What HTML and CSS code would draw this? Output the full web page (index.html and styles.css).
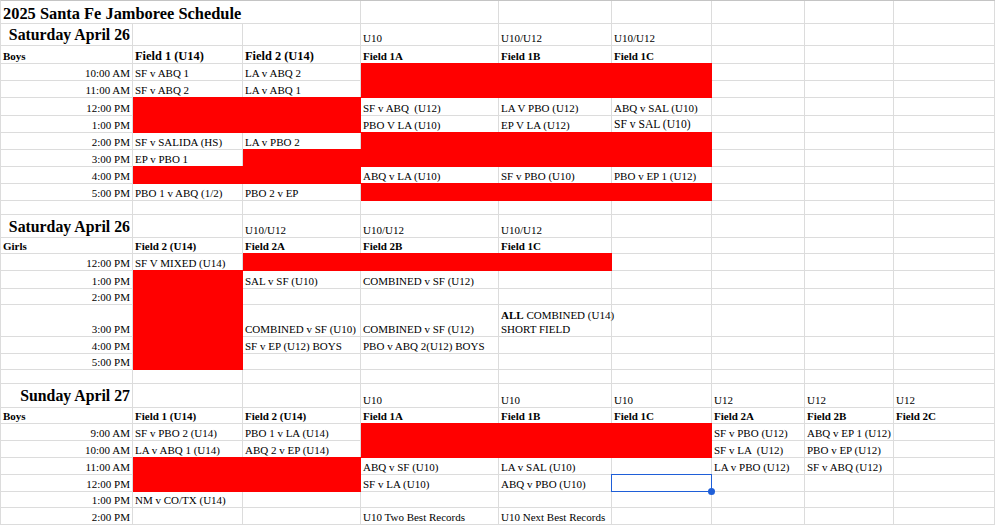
FILE: index.html
```html
<!DOCTYPE html>
<html lang="en">
<head>
<meta charset="utf-8">
<title>2025 Santa Fe Jamboree Schedule</title>
<link rel="stylesheet" href="styles.css">
</head>
<body>
<div class="sheet">
<!-- R1 -->
<div class="c title">2025 Santa Fe Jamboree Schedule</div><div class="c"></div><div class="c"></div><div class="c"></div><div class="c"></div><div class="c"></div><div class="c"></div>
<!-- R2 -->
<div class="c day">Saturday April 26</div><div class="c"></div><div class="c"></div><div class="c">U10</div><div class="c">U10/U12</div><div class="c">U10/U12</div><div class="c"></div><div class="c"></div><div class="c"></div>
<!-- R3 -->
<div class="c b">Boys</div><div class="c b big">Field 1 (U14)</div><div class="c b big">Field 2 (U14)</div><div class="c b">Field 1A</div><div class="c b">Field 1B</div><div class="c b">Field 1C</div><div class="c"></div><div class="c"></div><div class="c"></div>
<!-- R4 -->
<div class="c r">10:00 AM</div><div class="c">SF v ABQ 1</div><div class="c">LA v ABQ 2</div><div class="c red"></div><div class="c red"></div><div class="c red"></div><div class="c"></div><div class="c"></div><div class="c"></div>
<!-- R5 -->
<div class="c r">11:00 AM</div><div class="c">SF v ABQ 2</div><div class="c">LA v ABQ 1</div><div class="c red"></div><div class="c red"></div><div class="c red"></div><div class="c"></div><div class="c"></div><div class="c"></div>
<!-- R6 -->
<div class="c r">12:00 PM</div><div class="c red"></div><div class="c red"></div><div class="c">SF v ABQ &nbsp;(U12)</div><div class="c">LA V PBO (U12)</div><div class="c">ABQ v SAL (U10)</div><div class="c"></div><div class="c"></div><div class="c"></div>
<!-- R7 -->
<div class="c r">1:00 PM</div><div class="c red"></div><div class="c red"></div><div class="c">PBO V LA (U10)</div><div class="c">EP V LA (U12)</div><div class="c mid">SF v SAL (U10)</div><div class="c"></div><div class="c"></div><div class="c"></div>
<!-- R8 -->
<div class="c r">2:00 PM</div><div class="c">SF v SALIDA (HS)</div><div class="c">LA v PBO 2</div><div class="c red"></div><div class="c red"></div><div class="c red"></div><div class="c"></div><div class="c"></div><div class="c"></div>
<!-- R9 -->
<div class="c r">3:00 PM</div><div class="c">EP v PBO 1</div><div class="c red"></div><div class="c red"></div><div class="c red"></div><div class="c red"></div><div class="c"></div><div class="c"></div><div class="c"></div>
<!-- R10 -->
<div class="c r">4:00 PM</div><div class="c red"></div><div class="c red"></div><div class="c">ABQ v LA (U10)</div><div class="c">SF v PBO (U10)</div><div class="c">PBO v EP 1 (U12)</div><div class="c"></div><div class="c"></div><div class="c"></div>
<!-- R11 -->
<div class="c r">5:00 PM</div><div class="c">PBO 1 v ABQ (1/2)</div><div class="c">PBO 2 v EP</div><div class="c red"></div><div class="c red"></div><div class="c red"></div><div class="c"></div><div class="c"></div><div class="c"></div>
<!-- R12 -->
<div class="c"></div><div class="c"></div><div class="c"></div><div class="c"></div><div class="c"></div><div class="c"></div><div class="c"></div><div class="c"></div><div class="c"></div>
<!-- R13 -->
<div class="c day">Saturday April 26</div><div class="c"></div><div class="c">U10/U12</div><div class="c">U10/U12</div><div class="c">U10/U12</div><div class="c"></div><div class="c"></div><div class="c"></div><div class="c"></div>
<!-- R14 -->
<div class="c b">Girls</div><div class="c b">Field 2 (U14)</div><div class="c b">Field 2A</div><div class="c b">Field 2B</div><div class="c b">Field 1C</div><div class="c"></div><div class="c"></div><div class="c"></div><div class="c"></div>
<!-- R15 -->
<div class="c r">12:00 PM</div><div class="c">SF V MIXED (U14)</div><div class="c red"></div><div class="c red"></div><div class="c red"></div><div class="c"></div><div class="c"></div><div class="c"></div><div class="c"></div>
<!-- R16 -->
<div class="c r">1:00 PM</div><div class="c red"></div><div class="c">SAL v SF (U10)</div><div class="c">COMBINED v SF (U12)</div><div class="c"></div><div class="c"></div><div class="c"></div><div class="c"></div><div class="c"></div>
<!-- R17 -->
<div class="c r">2:00 PM</div><div class="c red"></div><div class="c"></div><div class="c"></div><div class="c"></div><div class="c"></div><div class="c"></div><div class="c"></div><div class="c"></div>
<!-- R18 -->
<div class="c r">3:00 PM</div><div class="c red"></div><div class="c">COMBINED v SF (U10)</div><div class="c">COMBINED v SF (U12)</div><div class="c"><span><b>ALL</b> COMBINED (U14)<br>SHORT FIELD</span></div><div class="c"></div><div class="c"></div><div class="c"></div><div class="c"></div>
<!-- R19 -->
<div class="c r">4:00 PM</div><div class="c red"></div><div class="c">SF v EP (U12) BOYS</div><div class="c">PBO v ABQ 2(U12) BOYS</div><div class="c"></div><div class="c"></div><div class="c"></div><div class="c"></div><div class="c"></div>
<!-- R20 -->
<div class="c r">5:00 PM</div><div class="c red"></div><div class="c"></div><div class="c"></div><div class="c"></div><div class="c"></div><div class="c"></div><div class="c"></div><div class="c"></div>
<!-- R21 -->
<div class="c"></div><div class="c"></div><div class="c"></div><div class="c"></div><div class="c"></div><div class="c"></div><div class="c"></div><div class="c"></div><div class="c"></div>
<!-- R22 -->
<div class="c day sun">Sunday April 27</div><div class="c"></div><div class="c"></div><div class="c">U10</div><div class="c">U10</div><div class="c">U10</div><div class="c">U12</div><div class="c">U12</div><div class="c">U12</div>
<!-- R23 -->
<div class="c b">Boys</div><div class="c b">Field 1 (U14)</div><div class="c b">Field 2 (U14)</div><div class="c b">Field 1A</div><div class="c b">Field 1B</div><div class="c b">Field 1C</div><div class="c b">Field 2A</div><div class="c b">Field 2B</div><div class="c b">Field 2C</div>
<!-- R24 -->
<div class="c r">9:00 AM</div><div class="c">SF v PBO 2 (U14)</div><div class="c">PBO 1 v LA (U14)</div><div class="c red"></div><div class="c red"></div><div class="c red"></div><div class="c">SF v PBO (U12)</div><div class="c">ABQ v EP 1 (U12)</div><div class="c"></div>
<!-- R25 -->
<div class="c r">10:00 AM</div><div class="c">LA v ABQ 1 (U14)</div><div class="c">ABQ 2 v EP (U14)</div><div class="c red"></div><div class="c red"></div><div class="c red"></div><div class="c">SF v LA &nbsp;(U12)</div><div class="c">PBO v EP (U12)</div><div class="c"></div>
<!-- R26 -->
<div class="c r">11:00 AM</div><div class="c red"></div><div class="c red"></div><div class="c">ABQ v SF (U10)</div><div class="c">LA v SAL (U10)</div><div class="c"></div><div class="c">LA v PBO (U12)</div><div class="c">SF v ABQ (U12)</div><div class="c"></div>
<!-- R27 -->
<div class="c r">12:00 PM</div><div class="c red"></div><div class="c red"></div><div class="c">SF v LA (U10)</div><div class="c">ABQ v PBO (U10)</div><div class="c sel"></div><div class="c"></div><div class="c"></div><div class="c"></div>
<!-- R28 -->
<div class="c r">1:00 PM</div><div class="c">NM v CO/TX (U14)</div><div class="c"></div><div class="c"></div><div class="c"></div><div class="c"></div><div class="c"></div><div class="c"></div><div class="c"></div>
<!-- R29 -->
<div class="c r">2:00 PM</div><div class="c"></div><div class="c"></div><div class="c">U10 Two Best Records</div><div class="c">U10 Next Best Records</div><div class="c"></div><div class="c"></div><div class="c"></div><div class="c"></div>
</div>
</body>
</html>
```
FILE: styles.css
```css
html, body {
  margin: 0;
  padding: 0;
  background: #ffffff;
  overflow: hidden;
}

.sheet {
  display: grid;
  grid-template-columns: 132px 110px 118px 138px 113px 100px 93px 89px 101px;
  grid-template-rows:
    23px 22px 18px 17px 17px 18px 17px 17px 17px 17px 17px
    14px 23px 16px 17px 18px 16px 32px 17px 16px
    14px 24px 16px 17px 17px 17px 17px 16px 17px;
  width: 995px;
  box-sizing: border-box;
  border-left: 1px solid #dcdcdc;
  border-top: 1px solid #c4c4c4;
  font-family: "Liberation Serif", "Times New Roman", serif;
  font-size: 11px;
  line-height: 14px;
  color: #000000;
}

.c {
  box-sizing: border-box;
  border-right: 1px solid #dcdcdc;
  border-bottom: 1px solid #dcdcdc;
  display: flex;
  align-items: flex-end;
  padding: 0 2px;
  white-space: nowrap;
  min-width: 0;
}

.r {
  justify-content: flex-end;
}

.b {
  font-weight: bold;
}

.big {
  font-size: 12.4px;
}

.mid {
  font-size: 11.6px;
}

.title {
  grid-column: span 3;
  font-weight: bold;
  font-size: 16.4px;
  line-height: 18px;
}

.day {
  justify-content: flex-end;
  font-weight: bold;
  font-size: 15.8px;
  line-height: 18px;
  padding-bottom: 1px;
}

.sun {
  padding-bottom: 2px;
}

.red {
  background: #ff0000;
  border-color: #ff0000;
  box-shadow: 0 -1px 0 #ff0000;
}

.sel {
  position: relative;
  z-index: 1;
}

.sel::before {
  content: "";
  position: absolute;
  left: -1px;
  top: -1px;
  right: -1px;
  bottom: -1px;
  border: 1px solid #1f5fd8;
}

.sel::after {
  content: "";
  position: absolute;
  right: -4px;
  bottom: -4px;
  width: 7px;
  height: 7px;
  border-radius: 50%;
  background: #1f5fd8;
}
```
